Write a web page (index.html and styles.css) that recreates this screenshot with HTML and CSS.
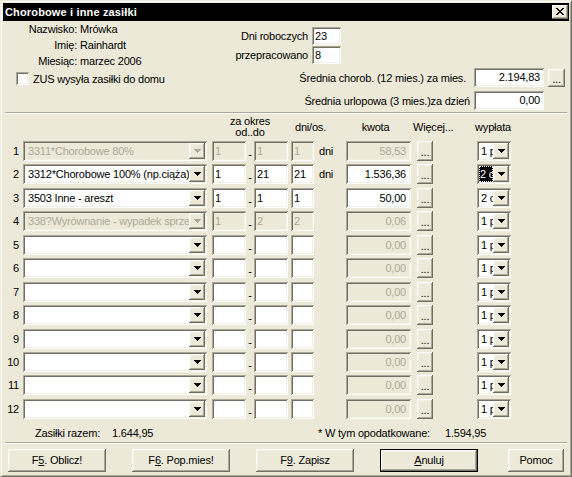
FILE: index.html
```html
<!DOCTYPE html>
<html lang="pl">
<head>
<meta charset="utf-8">
<title>Chorobowe i inne zasiłki</title>
<link rel="stylesheet" href="styles.css">
</head>
<body>
<svg class="defs" width="0" height="0">
  <symbol id="a" viewBox="0 0 7 4"><path d="M0 0h7v1h-1v1h-1v1h-1v1h-1v-1h-1v-1h-1v-1h-1z"/></symbol>
</svg>
<div class="window">
  <div class="titlebar">
    <span class="title">Chorobowe i inne zasiłki</span>
    <span class="close"><svg width="8" height="7" viewBox="0 0 8 7"><path d="M0 0h2v1H0zM6 0h2v1H6zM1 1h2v1H1zM5 1h2v1H5zM2 2h4v1H2zM3 3h2v1H3zM2 4h4v1H2zM1 5h2v1H1zM5 5h2v1H5zM0 6h2v1H0zM6 6h2v1H6z"/></svg></span>
  </div>

  <div class="head">
    <div class="person">
      <span class="lbl">Nazwisko:</span><span>Mrówka</span>
      <span class="lbl">Imię:</span><span>Rainhardt</span>
      <span class="lbl">Miesiąc:</span><span>marzec 2006</span>
    </div>
    <div class="days">
      <span class="lbl">Dni roboczych</span><span class="fld sm">23</span>
      <span class="lbl">przepracowano</span><span class="fld sm">8</span>
    </div>
    <div class="zus"><span class="check"></span><span>ZUS wysyła zasiłki do domu</span></div>
    <div class="avg">
      <span class="avg-lbl first">Średnia chorob. (12 mies.) za mies.</span>
      <span class="fld r avgf">2.194,83</span>
      <span class="btn small">...</span>
    </div>
    <div class="avg second">
      <span class="avg-lbl">Średnia urlopowa (3 mies.)za dzień</span>
      <span class="fld r avgf">0,00</span>
      <span></span>
    </div>
  </div>

  <div class="sep"></div>

  <div class="table">
    <div class="thead">
      <span class="h-okres">za okres<br>od..do</span>
      <span class="h-dnios">dni/os.</span>
      <span class="h-kwota">kwota</span>
      <span class="h-more">Więcej...</span>
      <span class="h-wyp">wypłata</span>
    </div>
    <div class="rows">
      <!-- 1 -->
      <span class="num">1</span>
      <div class="combo dis"><span class="ct">3311*Chorobowe 80%</span><span class="dd"><svg class="arr" viewBox="0 0 7 4"><use href="#a"/></svg></span></div>
      <span class="fld od dis">1</span><span class="dash">-</span><span class="fld dis">1</span>
      <span class="fld dn dis">1</span><span class="dni">dni</span>
      <span class="fld r dis">58,53</span>
      <span class="btn more">...</span>
      <div class="combo w"><span class="ct">1 p</span><span class="dd"><svg class="arr" viewBox="0 0 7 4"><use href="#a"/></svg></span></div>
      <!-- 2 -->
      <span class="num">2</span>
      <div class="combo"><span class="ct">3312*Chorobowe 100% (np.ciąża)</span><span class="dd"><svg class="arr" viewBox="0 0 7 4"><use href="#a"/></svg></span></div>
      <span class="fld od">1</span><span class="dash">-</span><span class="fld">21</span>
      <span class="fld dn">21</span><span class="dni">dni</span>
      <span class="fld r">1.536,36</span>
      <span class="btn more">...</span>
      <div class="combo w"><span class="ct"><span class="sel">2 c</span></span><span class="dd"><svg class="arr" viewBox="0 0 7 4"><use href="#a"/></svg></span></div>
      <!-- 3 -->
      <span class="num">3</span>
      <div class="combo"><span class="ct">3503 Inne - areszt</span><span class="dd"><svg class="arr" viewBox="0 0 7 4"><use href="#a"/></svg></span></div>
      <span class="fld od">1</span><span class="dash">-</span><span class="fld">1</span>
      <span class="fld dn">1</span><span class="dni"></span>
      <span class="fld r">50,00</span>
      <span class="btn more">...</span>
      <div class="combo w"><span class="ct">2 c</span><span class="dd"><svg class="arr" viewBox="0 0 7 4"><use href="#a"/></svg></span></div>
      <!-- 4 -->
      <span class="num">4</span>
      <div class="combo dis"><span class="ct">338?Wyrównanie - wypadek sprzed</span><span class="dd"><svg class="arr" viewBox="0 0 7 4"><use href="#a"/></svg></span></div>
      <span class="fld od dis">1</span><span class="dash">-</span><span class="fld dis">2</span>
      <span class="fld dn dis">2</span><span class="dni"></span>
      <span class="fld r dis">0,06</span>
      <span class="btn more">...</span>
      <div class="combo w"><span class="ct">1 p</span><span class="dd"><svg class="arr" viewBox="0 0 7 4"><use href="#a"/></svg></span></div>
      <!-- 5 -->
      <span class="num">5</span>
      <div class="combo"><span class="ct"></span><span class="dd"><svg class="arr" viewBox="0 0 7 4"><use href="#a"/></svg></span></div>
      <span class="fld od"></span><span class="dash">-</span><span class="fld"></span>
      <span class="fld dn"></span><span class="dni"></span>
      <span class="fld r dis">0,00</span>
      <span class="btn more">...</span>
      <div class="combo w"><span class="ct">1 p</span><span class="dd"><svg class="arr" viewBox="0 0 7 4"><use href="#a"/></svg></span></div>
      <!-- 6 -->
      <span class="num">6</span>
      <div class="combo"><span class="ct"></span><span class="dd"><svg class="arr" viewBox="0 0 7 4"><use href="#a"/></svg></span></div>
      <span class="fld od"></span><span class="dash">-</span><span class="fld"></span>
      <span class="fld dn"></span><span class="dni"></span>
      <span class="fld r dis">0,00</span>
      <span class="btn more">...</span>
      <div class="combo w"><span class="ct">1 p</span><span class="dd"><svg class="arr" viewBox="0 0 7 4"><use href="#a"/></svg></span></div>
      <!-- 7 -->
      <span class="num">7</span>
      <div class="combo"><span class="ct"></span><span class="dd"><svg class="arr" viewBox="0 0 7 4"><use href="#a"/></svg></span></div>
      <span class="fld od"></span><span class="dash">-</span><span class="fld"></span>
      <span class="fld dn"></span><span class="dni"></span>
      <span class="fld r dis">0,00</span>
      <span class="btn more">...</span>
      <div class="combo w"><span class="ct">1 p</span><span class="dd"><svg class="arr" viewBox="0 0 7 4"><use href="#a"/></svg></span></div>
      <!-- 8 -->
      <span class="num">8</span>
      <div class="combo"><span class="ct"></span><span class="dd"><svg class="arr" viewBox="0 0 7 4"><use href="#a"/></svg></span></div>
      <span class="fld od"></span><span class="dash">-</span><span class="fld"></span>
      <span class="fld dn"></span><span class="dni"></span>
      <span class="fld r dis">0,00</span>
      <span class="btn more">...</span>
      <div class="combo w"><span class="ct">1 p</span><span class="dd"><svg class="arr" viewBox="0 0 7 4"><use href="#a"/></svg></span></div>
      <!-- 9 -->
      <span class="num">9</span>
      <div class="combo"><span class="ct"></span><span class="dd"><svg class="arr" viewBox="0 0 7 4"><use href="#a"/></svg></span></div>
      <span class="fld od"></span><span class="dash">-</span><span class="fld"></span>
      <span class="fld dn"></span><span class="dni"></span>
      <span class="fld r dis">0,00</span>
      <span class="btn more">...</span>
      <div class="combo w"><span class="ct">1 p</span><span class="dd"><svg class="arr" viewBox="0 0 7 4"><use href="#a"/></svg></span></div>
      <!-- 10 -->
      <span class="num">10</span>
      <div class="combo"><span class="ct"></span><span class="dd"><svg class="arr" viewBox="0 0 7 4"><use href="#a"/></svg></span></div>
      <span class="fld od"></span><span class="dash">-</span><span class="fld"></span>
      <span class="fld dn"></span><span class="dni"></span>
      <span class="fld r dis">0,00</span>
      <span class="btn more">...</span>
      <div class="combo w"><span class="ct">1 p</span><span class="dd"><svg class="arr" viewBox="0 0 7 4"><use href="#a"/></svg></span></div>
      <!-- 11 -->
      <span class="num">11</span>
      <div class="combo"><span class="ct"></span><span class="dd"><svg class="arr" viewBox="0 0 7 4"><use href="#a"/></svg></span></div>
      <span class="fld od"></span><span class="dash">-</span><span class="fld"></span>
      <span class="fld dn"></span><span class="dni"></span>
      <span class="fld r dis">0,00</span>
      <span class="btn more">...</span>
      <div class="combo w"><span class="ct">1 p</span><span class="dd"><svg class="arr" viewBox="0 0 7 4"><use href="#a"/></svg></span></div>
      <!-- 12 -->
      <span class="num">12</span>
      <div class="combo"><span class="ct"></span><span class="dd"><svg class="arr" viewBox="0 0 7 4"><use href="#a"/></svg></span></div>
      <span class="fld od"></span><span class="dash">-</span><span class="fld"></span>
      <span class="fld dn"></span><span class="dni"></span>
      <span class="fld r dis">0,00</span>
      <span class="btn more">...</span>
      <div class="combo w"><span class="ct">1 p</span><span class="dd"><svg class="arr" viewBox="0 0 7 4"><use href="#a"/></svg></span></div>
    </div>
  </div>

  <div class="totals">
    <span class="t1"><span>Zasiłki razem:</span><span>1.644,95</span></span>
    <span class="t2"><span>* W tym opodatkowane:</span><span>1.594,95</span></span>
  </div>

  <div class="sep"></div>

  <div class="buttons">
    <span class="btn big">F<u>5</u>. Oblicz!</span>
    <span class="btn big">F<u>6</u>. Pop.mies!</span>
    <span class="btn big">F<u>9</u>. Zapisz</span>
    <span class="btn big default"><u>A</u>nuluj</span>
    <span class="btn help">Pomoc</span>
  </div>
</div>
</body>
</html>
```

FILE: styles.css
```css
* { box-sizing: border-box; }
html, body { margin: 0; padding: 0; }
body {
  font-family: "Liberation Sans", Arial, sans-serif;
  font-size: 11px;
  letter-spacing: -0.2px;
  color: #000;
  background: #ECE9D8;
}
.defs { position: absolute; width: 0; height: 0; overflow: hidden; }

.window {
  width: 572px;
  height: 477px;
  background: #ECE9D8;
  border: 1px solid;
  border-color: #ECE9D8 #716F64 #716F64 #ECE9D8;
  box-shadow: inset 1px 1px #fff, inset -1px -1px #ACA899;
  padding: 2px;
  display: flex;
  flex-direction: column;
}

/* title bar */
.titlebar {
  height: 18px;
  flex: none;
  background: #000;
  color: #fff;
  display: flex;
  align-items: center;
  justify-content: space-between;
  padding: 0 1px 0 2px;
}
.title { font-weight: bold; letter-spacing: 0.15px; }
.close {
  width: 16px;
  height: 14px;
  background: #ECE9D8;
  box-shadow: inset -1px -1px #716F64, inset 1px 1px #fff, inset -2px -2px #ACA899, inset 2px 2px #F1EFE2;
  display: flex;
  align-items: center;
  justify-content: center;
  padding-bottom: 1px;
}
.close svg { display: block; fill: #000; }

/* 3D styles */
.fld, .combo, .check {
  background: #fff;
  box-shadow: inset 1px 1px #ACA899, inset -1px -1px #fff, inset 2px 2px #716F64, inset -2px -2px #F1EFE2;
}
.btn, .dd {
  background: #ECE9D8;
  box-shadow: inset -1px -1px #716F64, inset 1px 1px #fff, inset -2px -2px #ACA899, inset 2px 2px #F1EFE2;
}
.dis, .combo.dis .ct { background: #ECE9D8; color: #ACA899; }

/* head */
.head {
  display: grid;
  grid-template-columns: 225px 1fr;
  flex: none;
}
.person {
  display: grid;
  grid-template-columns: 74px auto;
  column-gap: 3px;
  line-height: 16px;
  height: 48px;
}
.lbl { text-align: right; white-space: nowrap; }
.days {
  padding-top: 6px;
  display: grid;
  grid-template-columns: 80px 29px;
  grid-auto-rows: 18px;
  column-gap: 4px;
  row-gap: 1px;
  align-items: center;
}
.fld {
  display: block;
  height: 20px;
  line-height: 20px;
  padding: 0 3px;
  white-space: nowrap;
  overflow: hidden;
}
.fld.sm { height: 18px; line-height: 18px; }
.fld.r { text-align: right; padding-right: 5px; }

.zus {
  display: flex;
  align-items: center;
  gap: 4px;
  padding-left: 13px;
  margin-top: 1px;
}
.check { width: 13px; height: 13px; display: block; }

.avg {
  justify-self: end;
  margin-top: -1px;
  display: grid;
  grid-template-columns: auto 70px 17px;
  column-gap: 4px;
  align-items: center;
  padding-right: 4px;
}
.avg.second { grid-column: 2; margin-top: 4px; }
.avg-lbl { text-align: right; white-space: nowrap; }
.avg-lbl.first { margin-right: 4px; }
.fld.avgf { height: 19px; line-height: 19px; padding-right: 4px; }
.btn.small {
  height: 18px;
  text-align: center;
  line-height: 20px;
}

.sep {
  flex: none;
  height: 2px;
  border-top: 1px solid #ACA899;
  border-bottom: 1px solid #fff;
  margin: 2px 2px 0;
}

/* table */
.table { padding-left: 1px; flex: none; }
.thead, .rows {
  display: grid;
  grid-template-columns: 16px 187px 39px 8px 34px 26px 32px 65px 22px 78px;
}
.thead {
  margin-top: 2px;
  height: 22px;
  margin-bottom: 3px;
  line-height: 11px;
  white-space: nowrap;
}
.thead > span { align-self: center; }
.h-okres { grid-column: 3 / 6; text-align: center; padding-left: 5px; align-self: start !important; }
.h-dnios { grid-column: 6; padding-left: 7px; }
.h-kwota { grid-column: 8; text-align: center; padding-right: 6px; }
.h-more { grid-column: 9; padding-left: 2px; }
.h-wyp { grid-column: 10; text-align: right; }

.rows {
  grid-auto-rows: 20px;
  row-gap: 3.45px;
}
.num { text-align: right; padding-right: 1px; line-height: 20px; }
.combo {
  width: 184px;
  height: 20px;
  justify-self: end;
  display: flex;
  padding: 2px;
}
.combo.w { width: 34px; }
.ct {
  flex: 1;
  min-width: 0;
  overflow: hidden;
  white-space: nowrap;
  padding-left: 3px;
  line-height: 16px;
  background: #fff;
}
.combo.w .ct { padding-left: 2px; }
.dd {
  flex: none;
  width: 16px;
  height: 16px;
  display: flex;
  align-items: center;
  justify-content: center;
}
.arr { width: 7px; height: 4px; display: block; fill: #000; }
.combo.dis .arr { fill: #ACA899; }
.sel {
  display: block;
  height: 16px;
  background: #000;
  color: #fff;
  outline: 1px dotted #ECE9D8;
  outline-offset: -1px;
  padding-left: 1px;
  margin-left: -2px;
}
.fld.od { width: 34px; justify-self: end; }
.fld.dn { width: 23px; justify-self: end; }
.dash { text-align: center; align-self: end; line-height: 13px; }
.dni { padding-left: 5px; line-height: 20px; }
.btn.more {
  width: 16px;
  justify-self: end;
  text-align: center;
  line-height: 22px;
}

/* totals & buttons */
.totals {
  flex: none;
  display: flex;
  margin-top: 7px;
  line-height: 14px;
  padding-left: 32px;
}
.t1 { width: 283px; display: flex; gap: 12px; }
.t2 { display: flex; gap: 15px; }

.buttons {
  flex: none;
  display: flex;
  gap: 26px;
  padding-left: 5px;
  margin-top: 5px;
}
.btn.big, .btn.help {
  width: 98px;
  height: 23px;
  display: flex;
  align-items: center;
  justify-content: center;
}
.btn.help { width: 56px; margin-left: 4px; }
.btn.default { border: 1px solid #000; }
u { text-decoration: underline; text-underline-offset: 1px; }
```
